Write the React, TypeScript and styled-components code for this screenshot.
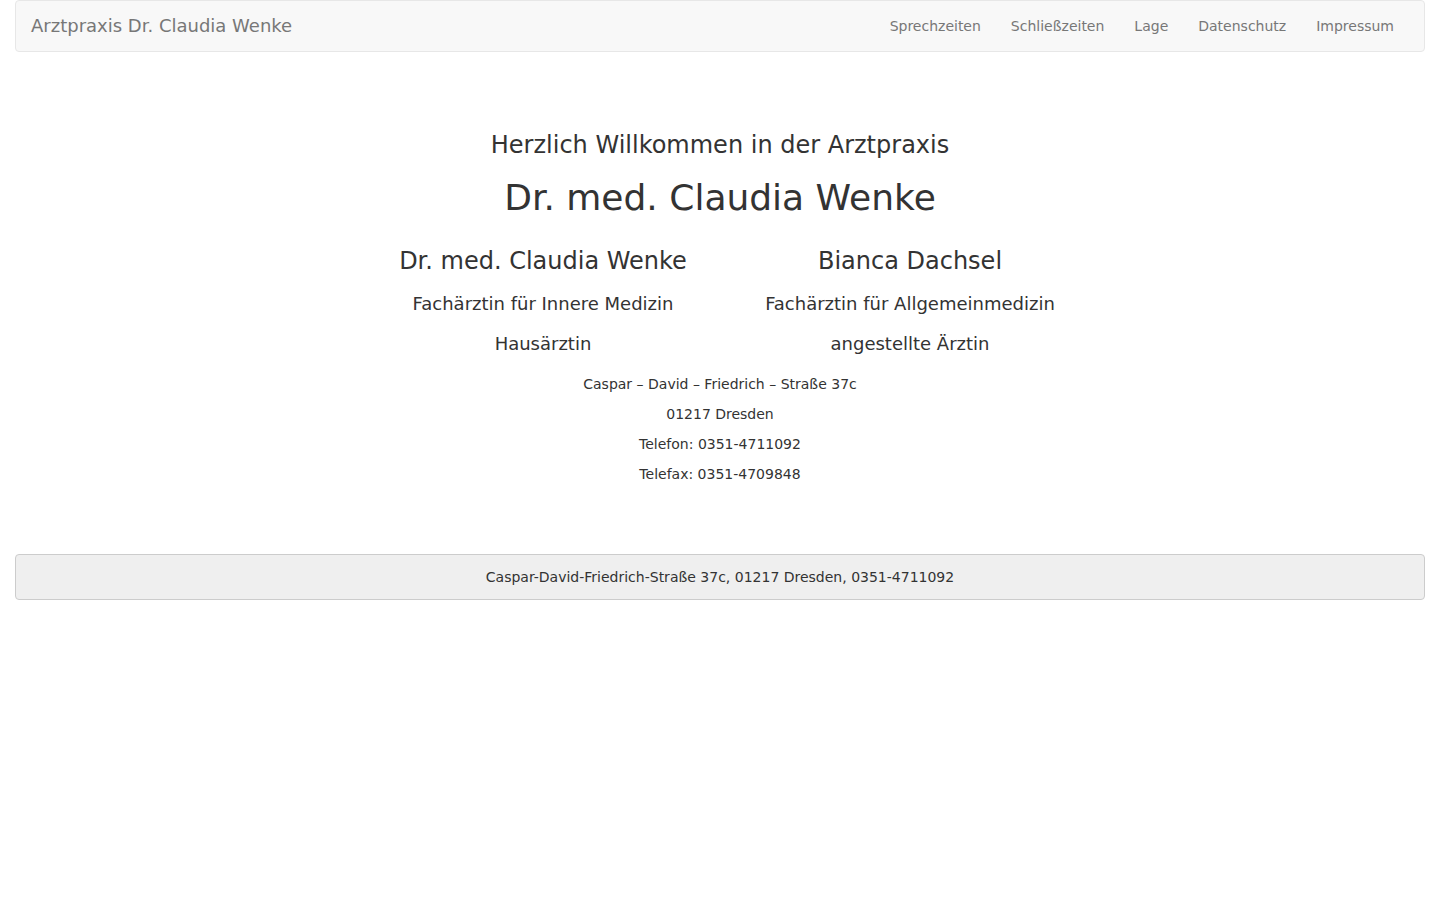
import React from "react";
import styled, { createGlobalStyle } from "styled-components";

const Global = createGlobalStyle`
  html, body { margin: 0; padding: 0; background: #fff; }
  body {
    font-family: "DejaVu Sans", "Liberation Sans", sans-serif;
    font-size: 14px;
    line-height: 1.42857;
    color: #333;
  }
  * { box-sizing: border-box; }
`;

const Page = styled.div`
  padding: 0 15px;
`;

const Navbar = styled.nav`
  display: flex;
  justify-content: space-between;
  align-items: center;
  min-height: 52px;
  background: #f8f8f8;
  border: 1px solid #e7e7e7;
  border-radius: 4px;
  padding: 0 15px;
`;

const Brand = styled.a`
  font-size: 18px;
  line-height: 20px;
  color: #777;
  text-decoration: none;
  padding: 15px 0;
`;

const NavList = styled.ul`
  display: flex;
  list-style: none;
  margin: 0;
  padding: 0;
`;

const NavLink = styled.a`
  display: block;
  padding: 15px;
  line-height: 20px;
  font-size: 14px;
  color: #777;
  text-decoration: none;
`;

const Main = styled.main`
  text-align: center;
  padding-top: 80px;
`;

const Welcome = styled.h3`
  font-weight: 400;
  font-size: 24px;
  line-height: 26px;
  margin: 0;
`;

const Title = styled.h1`
  font-weight: 400;
  font-size: 36px;
  line-height: 40px;
  margin: 20px 0 0;
`;

const Doctors = styled.div`
  display: grid;
  grid-template-columns: 380px 354px;
  justify-content: center;
  margin-top: 30px;
`;

const Doctor = styled.div`
  display: flex;
  flex-direction: column;
  align-items: center;
  gap: 20px;
`;

const Name = styled.h3`
  font-weight: 400;
  font-size: 24px;
  line-height: 26px;
  margin: 0;
`;

const Role = styled.h4`
  font-weight: 400;
  font-size: 18px;
  line-height: 20px;
  margin: 0;
`;

const Address = styled.div`
  display: flex;
  flex-direction: column;
  gap: 10px;
  margin-top: 20px;
`;

const Line = styled.p`
  margin: 0;
  font-size: 14px;
  line-height: 20px;
`;

const Footer = styled.footer`
  margin-top: 70px;
  background: #efefef;
  border: 1px solid #cccccc;
  border-radius: 4px;
  text-align: center;
  padding: 12px 15px;
  font-size: 14px;
  line-height: 20px;
  color: #333;
`;

const links = ["Sprechzeiten", "Schließzeiten", "Lage", "Datenschutz", "Impressum"];

const doctors = [
  { name: "Dr. med. Claudia Wenke", roles: ["Fachärztin für Innere Medizin", "Hausärztin"] },
  { name: "Bianca Dachsel", roles: ["Fachärztin für Allgemeinmedizin", "angestellte Ärztin"] },
];

const address = [
  "Caspar – David – Friedrich – Straße 37c",
  "01217 Dresden",
  "Telefon: 0351-4711092",
  "Telefax: 0351-4709848",
];

export default function App() {
  return (
    <>
      <Global />
      <Page>
        <Navbar>
          <Brand href="#">Arztpraxis Dr. Claudia Wenke</Brand>
          <NavList>
            {links.map((l) => (
              <li key={l}>
                <NavLink href="#">{l}</NavLink>
              </li>
            ))}
          </NavList>
        </Navbar>
        <Main>
          <Welcome>Herzlich Willkommen in der Arztpraxis</Welcome>
          <Title>Dr. med. Claudia Wenke</Title>
          <Doctors>
            {doctors.map((d) => (
              <Doctor key={d.name}>
                <Name>{d.name}</Name>
                {d.roles.map((r) => (
                  <Role key={r}>{r}</Role>
                ))}
              </Doctor>
            ))}
          </Doctors>
          <Address>
            {address.map((a) => (
              <Line key={a}>{a}</Line>
            ))}
          </Address>
        </Main>
        <Footer>Caspar-David-Friedrich-Straße 37c, 01217 Dresden, 0351-4711092</Footer>
      </Page>
    </>
  );
}
